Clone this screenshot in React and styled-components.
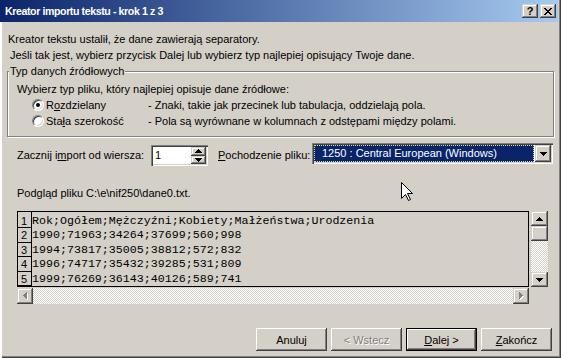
import React from 'react';
import styled, { createGlobalStyle, css } from 'styled-components';

const C = {
  face: '#D4D0C8',
  shadow: '#808080',
  dark: '#404040',
  light: '#FFFFFF',
  sel: '#0A246A',
};

const Global = createGlobalStyle`
  html, body { margin: 0; padding: 0; background: ${C.face}; }
  body { font-family: "Liberation Sans", Arial, sans-serif; font-size: 11px; color: #000; }
  * { box-sizing: border-box; }
`;

const raised = css`
  box-shadow: inset -1px -1px ${C.dark}, inset 1px 1px ${C.light},
    inset -2px -2px ${C.shadow}, inset 2px 2px ${C.face};
`;
const raisedFrame = css`
  box-shadow: inset -1px -1px ${C.dark}, inset 1px 1px ${C.face},
    inset -2px -2px ${C.shadow}, inset 2px 2px ${C.light};
`;
const sunken = css`
  box-shadow: inset 1px 1px ${C.shadow}, inset 2px 2px ${C.dark},
    inset -1px -1px ${C.light}, inset -2px -2px ${C.face};
`;

const Window = styled.div`
  position: relative;
  width: 561px;
  height: 358px;
  background: ${C.face};
  display: flex;
  flex-direction: column;
  overflow: hidden;
  box-shadow: inset 2px 0 ${C.light}, inset -1px -1px ${C.dark},
    inset -2px -2px ${C.shadow};
`;

const TitleBar = styled.div`
  height: 22px;
  margin-right: 3px;
  background: linear-gradient(to right, #0a246a, #a6caf0);
  display: flex;
  align-items: center;
  padding: 0 2px 0 5px;
`;

const Title = styled.span`
  flex: 1;
  color: #fff;
  font-weight: bold;
  font-size: 10.6px;
  letter-spacing: -0.4px;
  white-space: nowrap;
`;

const CapButton = styled.div`
  width: 16px;
  height: 14px;
  margin-left: ${(p) => p.$gap || 0}px;
  background: ${C.face};
  ${raisedFrame};
  display: flex;
  align-items: center;
  justify-content: center;
  font-weight: bold;
  font-size: 11px;
  line-height: 14px;
  color: #000;
`;

const Body = styled.div`
  flex: 1;
  display: flex;
  flex-direction: column;
  padding: 9px 7px 0 7px;
`;

const Intro = styled.div`
  line-height: 16px;
  height: 16px;
  margin-left: ${(p) => p.$indent}px;
  white-space: nowrap;
`;

const Group = styled.div`
  margin-top: 8px;
  border: 1px solid ${C.shadow};
  box-shadow: inset 1px 1px ${C.light}, 1px 1px ${C.light};
  padding: 0 0 7px 9px;
  display: flex;
  flex-direction: column;
`;

const Legend = styled.div`
  width: fit-content;
  margin: -9px 0 0 -8px;
  padding: 0 1px;
  line-height: 16px;
  background: ${C.face};
  white-space: nowrap;
`;

const GroupRow = styled.div`
  height: 16px;
  line-height: 16px;
  display: flex;
  align-items: center;
  white-space: nowrap;
  margin-top: ${(p) => p.$top || 0}px;
`;

const RadioCircle = styled.span`
  position: relative;
  width: 12px;
  height: 12px;
  margin-left: 15px;
  margin-right: 2px;
  border-radius: 50%;
  background: #fff;
  border: 1px solid;
  border-color: ${C.shadow} ${C.light} ${C.light} ${C.shadow};
  box-shadow: inset 1px 1px ${C.dark}, inset -1px -1px ${C.face};
  flex: none;
  &::after {
    content: '';
    display: ${(p) => (p.$checked ? 'block' : 'none')};
    position: absolute;
    left: 3px;
    top: 3px;
    width: 4px;
    height: 4px;
    border-radius: 50%;
    background: #000;
  }
`;

const RadioLabel = styled.span`
  width: 102px;
  flex: none;
`;

const U = styled.span`
  text-decoration: underline;
`;

const ImportRow = styled.div`
  margin-top: 6px;
  margin-left: 10px;
  display: flex;
  align-items: flex-start;
  white-space: nowrap;
`;

const FieldLabel = styled.span`
  width: ${(p) => p.$w}px;
  margin-top: 4px;
  margin-left: ${(p) => p.$left || 0}px;
  line-height: 16px;
  flex: none;
`;

const Spin = styled.div`
  width: 57px;
  height: 21px;
  margin-top: 2px;
  padding: 2px;
  background: #fff;
  ${sunken};
  display: flex;
  flex: none;
`;

const SpinText = styled.span`
  flex: 1;
  padding-left: 2px;
  line-height: 17px;
`;

const SpinButtons = styled.div`
  width: 15px;
  display: flex;
  flex-direction: column;
`;

const SmallBtn = styled.div`
  flex: 1;
  background: ${C.face};
  ${raisedFrame};
  display: flex;
  align-items: center;
  justify-content: center;
`;

const Combo = styled.div`
  width: 241px;
  height: 21px;
  padding: 2px;
  background: #fff;
  ${sunken};
  display: flex;
  flex: none;
`;

const ComboValue = styled.div`
  flex: 1;
  background: ${C.sel};
  color: #fff;
  line-height: 17px;
  padding-left: 8px;
  outline: 1px dotted #dcdc9a;
  outline-offset: -1px;
  margin-right: 1px;
`;

const ComboButton = styled.div`
  width: 16px;
  background: ${C.face};
  ${raisedFrame};
  display: flex;
  align-items: center;
  justify-content: center;
`;

const PreviewCaption = styled.div`
  margin-top: 19px;
  margin-left: 10px;
  line-height: 16px;
  white-space: nowrap;
`;

const PreviewArea = styled.div`
  margin-top: 10px;
  margin-left: 10px;
  display: grid;
  grid-template-columns: 512px 17px;
  grid-template-rows: 76px 16px;
  column-gap: 2px;
  row-gap: 1px;
`;

const PreviewBox = styled.div`
  border: 1px solid #000;
  background: ${C.face};
  display: flex;
  overflow: hidden;
`;

const NumCol = styled.div`
  width: 14px;
  border-right: 1px solid #000;
  padding-top: 1.5px;
  flex: none;
`;

const NumCell = styled.div`
  height: 14.6px;
  border-bottom: 1px solid #000;
  font-size: 11px;
  line-height: 14px;
  padding-left: 3px;
`;

const TextCol = styled.div`
  flex: 1;
  padding-top: 1.5px;
  font-family: "Liberation Mono", "Courier New", monospace;
  font-size: 11.65px;
`;

const TextLine = styled.div`
  height: 14.6px;
  line-height: 14.6px;
  white-space: pre;
`;

const Track = styled.div`
  display: flex;
  flex-direction: ${(p) => (p.$vertical ? 'column' : 'row')};
  justify-content: space-between;
  background-color: #fff;
  background-image: conic-gradient(
    ${C.face} 25%,
    #fff 0 50%,
    ${C.face} 0 75%,
    #fff 0
  );
  background-size: 2px 2px;
`;

const ScrollBtn = styled.div`
  flex: none;
  width: ${(p) => (p.$vertical ? '100%' : '16px')};
  height: ${(p) => (p.$vertical ? '15px' : '100%')};
  background: ${C.face};
  ${raisedFrame};
  display: flex;
  align-items: center;
  justify-content: center;
`;

const VGroup = styled.div`
  display: flex;
  flex-direction: column;
`;

const ButtonRow = styled.div`
  margin-top: 24px;
  margin-right: 2px;
  display: flex;
  justify-content: flex-end;
  gap: 4px;
`;

const PushButton = styled.div`
  width: 71px;
  height: 23px;
  background: ${C.face};
  border: ${(p) => (p.$default ? '1px solid #000' : 'none')};
  ${raised};
  display: flex;
  align-items: center;
  justify-content: center;
  white-space: nowrap;
  color: ${(p) => (p.$disabled ? C.shadow : '#000')};
  text-shadow: ${(p) => (p.$disabled ? '1px 1px #fff' : 'none')};
`;

const Cursor = styled.svg`
  position: absolute;
  left: 401px;
  top: 182px;
`;

const Arrow = ({ dir, color = '#000' }) => {
  const paths = {
    up: 'M3 0h1v1h-1z M2 1h3v1h-3z M1 2h5v1h-5z M0 3h7v1h-7z',
    down: 'M0 0h7v1h-7z M1 1h5v1h-5z M2 2h3v1h-3z M3 3h1v1h-1z',
    left: 'M3 0h1v7h-1z M2 1h1v5h-1z M1 2h1v3h-1z M0 3h1v1h-1z',
    right: 'M0 0h1v7h-1z M1 1h1v5h-1z M2 2h1v3h-1z M3 3h1v1h-1z',
  };
  const horiz = dir === 'left' || dir === 'right';
  const w = horiz ? 4 : 7;
  const h = horiz ? 7 : 4;
  if (color === 'disabled') {
    return (
      <svg width={w + 1} height={h + 1} viewBox={`0 0 ${w + 1} ${h + 1}`}>
        <path d={paths[dir]} fill="#fff" transform="translate(1 1)" />
        <path d={paths[dir]} fill={C.shadow} />
      </svg>
    );
  }
  return (
    <svg width={w} height={h} viewBox={`0 0 ${w} ${h}`}>
      <path d={paths[dir]} fill={color} />
    </svg>
  );
};

const rows = [
  'Rok;Ogółem;Mężczyźni;Kobiety;Małżeństwa;Urodzenia',
  '1990;71963;34264;37699;560;998',
  '1994;73817;35005;38812;572;832',
  '1996;74717;35432;39285;531;809',
  '1999;76269;36143;40126;589;741',
];

export default function App() {
  return (
    <>
      <Global />
      <Window>
        <TitleBar>
          <Title>Kreator importu tekstu - krok 1 z 3</Title>
          <CapButton>?</CapButton>
          <CapButton $gap={2}>
            <svg width="8" height="7" viewBox="0 0 8 7">
              <path
                d="M0 0h2v1h-2z M6 0h2v1h-2z M1 1h2v1h-2z M5 1h2v1h-2z M2 2h4v1h-4z M3 3h2v1h-2z M2 4h4v1h-4z M1 5h2v1h-2z M5 5h2v1h-2z M0 6h2v1h-2z M6 6h2v1h-2z"
                fill="#000"
              />
            </svg>
          </CapButton>
        </TitleBar>
        <Body>
          <Intro $indent={1}>Kreator tekstu ustalił, że dane zawierają separatory.</Intro>
          <Intro $indent={3}>
            Jeśli tak jest, wybierz przycisk Dalej lub wybierz typ najlepiej opisujący Twoje dane.
          </Intro>
          <Group>
            <Legend>Typ danych źródłowych</Legend>
            <GroupRow $top={2}>Wybierz typ pliku, który najlepiej opisuje dane źródłowe:</GroupRow>
            <GroupRow>
              <RadioCircle $checked />
              <RadioLabel>
                R<U>o</U>zdzielany
              </RadioLabel>
              <span>- Znaki, takie jak przecinek lub tabulacja, oddzielają pola.</span>
            </GroupRow>
            <GroupRow>
              <RadioCircle />
              <RadioLabel>
                Sta<U>ł</U>a szerokość
              </RadioLabel>
              <span>- Pola są wyrównane w kolumnach z odstępami między polami.</span>
            </GroupRow>
          </Group>
          <ImportRow>
            <FieldLabel $w={134}>
              Zacznij i<U>m</U>port od wiersza:
            </FieldLabel>
            <Spin>
              <SpinText>1</SpinText>
              <SpinButtons>
                <SmallBtn>
                  <Arrow dir="up" />
                </SmallBtn>
                <SmallBtn>
                  <Arrow dir="down" />
                </SmallBtn>
              </SpinButtons>
            </Spin>
            <FieldLabel $w={94} $left={10}>
              <U>P</U>ochodzenie pliku:
            </FieldLabel>
            <Combo>
              <ComboValue>1250 : Central European (Windows)</ComboValue>
              <ComboButton>
                <Arrow dir="down" />
              </ComboButton>
            </Combo>
          </ImportRow>
          <PreviewCaption>Podgląd pliku C:\e\nif250\dane0.txt.</PreviewCaption>
          <PreviewArea>
            <PreviewBox>
              <NumCol>
                {rows.map((_, i) => (
                  <NumCell key={i}>{i + 1}</NumCell>
                ))}
              </NumCol>
              <TextCol>
                {rows.map((r, i) => (
                  <TextLine key={i}>{r}</TextLine>
                ))}
              </TextCol>
            </PreviewBox>
            <Track $vertical>
              <VGroup>
                <ScrollBtn $vertical>
                  <Arrow dir="up" />
                </ScrollBtn>
                <ScrollBtn $vertical />
              </VGroup>
              <ScrollBtn $vertical>
                <Arrow dir="down" />
              </ScrollBtn>
            </Track>
            <Track>
              <ScrollBtn>
                <Arrow dir="left" color="disabled" />
              </ScrollBtn>
              <ScrollBtn>
                <Arrow dir="right" color="disabled" />
              </ScrollBtn>
            </Track>
          </PreviewArea>
          <ButtonRow>
            <PushButton>Anuluj</PushButton>
            <PushButton $disabled>&lt; Wstecz</PushButton>
            <PushButton $default>
              <U>D</U>alej &gt;
            </PushButton>
            <PushButton>
              <U>Z</U>akończ
            </PushButton>
          </ButtonRow>
        </Body>
        <Cursor width="12" height="20" viewBox="0 0 12 20">
          <path
            d="M0.5 0.5 L0.5 16.5 L4.5 12.5 L7.5 18.5 L9.5 17.5 L6.5 11.5 L11.5 11.5 Z"
            fill="#fff"
            stroke="#000"
            strokeWidth="1"
          />
        </Cursor>
      </Window>
    </>
  );
}
